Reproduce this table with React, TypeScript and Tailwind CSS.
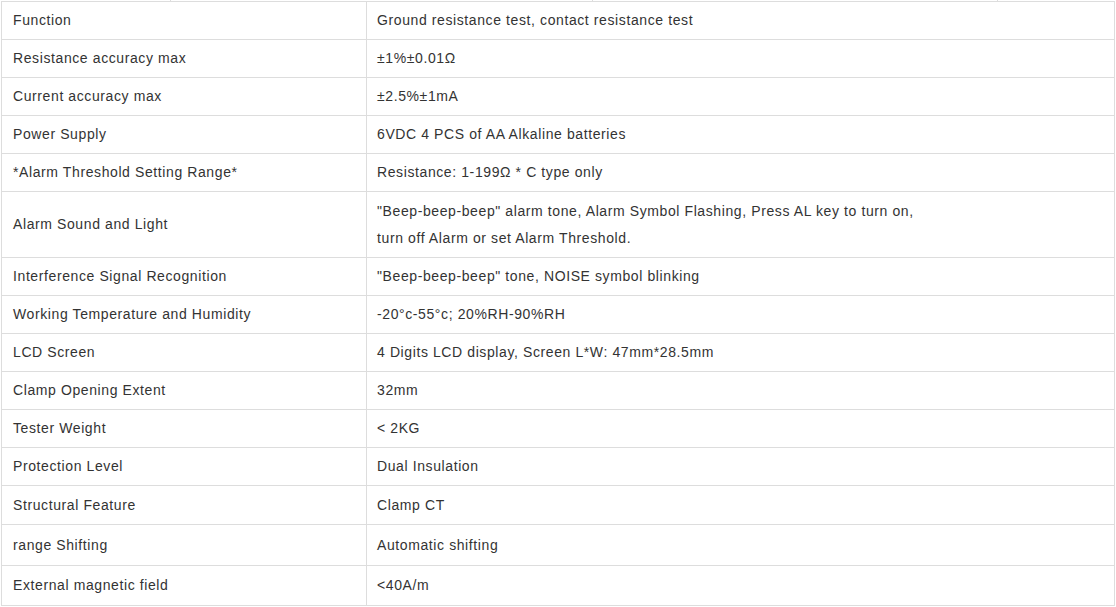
import React from "react";

type Row = { k: string; v: React.ReactNode; h: string };

const rows: Row[] = [
  { k: "Function", v: "Ground resistance test, contact resistance test", h: "h-[38px]" },
  { k: "Resistance accuracy max", v: "±1%±0.01Ω", h: "h-[38px]" },
  { k: "Current accuracy max", v: "±2.5%±1mA", h: "h-[38px]" },
  { k: "Power Supply", v: "6VDC 4 PCS of AA Alkaline batteries", h: "h-[38px]" },
  { k: "*Alarm Threshold Setting Range*", v: "Resistance: 1-199Ω * C type only", h: "h-[38px]" },
  {
    k: "Alarm Sound and Light",
    v: (
      <span className="leading-[27px]">
        "Beep-beep-beep" alarm tone, Alarm Symbol Flashing, Press AL key to turn on,
        <br />
        turn off Alarm or set Alarm Threshold.
      </span>
    ),
    h: "h-[66px]",
  },
  { k: "Interference Signal Recognition", v: "\"Beep-beep-beep\" tone, NOISE symbol blinking", h: "h-[38px]" },
  { k: "Working Temperature and Humidity", v: "-20°c-55°c; 20%RH-90%RH", h: "h-[38px]" },
  { k: "LCD Screen", v: "4 Digits LCD display, Screen L*W: 47mm*28.5mm", h: "h-[38px]" },
  { k: "Clamp Opening Extent", v: "32mm", h: "h-[38px]" },
  { k: "Tester Weight", v: "< 2KG", h: "h-[38px]" },
  { k: "Protection Level", v: "Dual Insulation", h: "h-[38px]" },
  { k: "Structural Feature", v: "Clamp CT", h: "h-[39px]" },
  { k: "range Shifting", v: "Automatic shifting", h: "h-[41px]" },
  { k: "External magnetic field", v: "<40A/m", h: "h-[40px]" },
];

export default function App() {
  return (
    <div
      className="w-[1116px] h-[607px] bg-white text-[14px] tracking-[0.6px] text-[#333333] overflow-hidden"
      style={{ fontFamily: '"Liberation Sans", Arial, sans-serif' }}
    >
      <div className="flex h-px">
        <div className="w-[171px] border-r border-[#dddddd]" />
        <div className="w-[422px] border-r border-[#dddddd]" />
        <div className="w-[405px] border-r border-[#dddddd]" />
      </div>
      <div className="ml-px w-[1114px] border-l border-t border-[#dddddd]">
        {rows.map((r, i) => (
          <div key={i} className={`flex border-b border-[#dddddd] ${r.h}`}>
            <div className="w-[365px] shrink-0 border-r border-[#dddddd] pl-[11px] pr-[10px] flex items-center">
              {r.k}
            </div>
            <div className="flex-1 border-r border-[#dddddd] px-[10px] flex items-center">
              {r.v}
            </div>
          </div>
        ))}
      </div>
    </div>
  );
}
